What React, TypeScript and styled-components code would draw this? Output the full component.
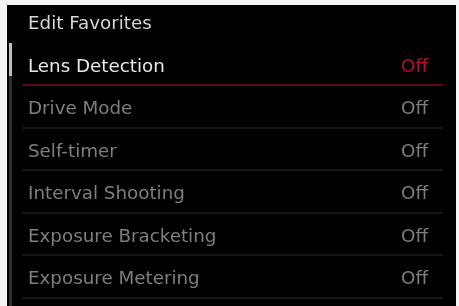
import styled, { createGlobalStyle } from 'styled-components';

const GlobalStyle = createGlobalStyle`
  html, body {
    margin: 0;
    padding: 0;
    background: #ffffff;
  }
`;

const Frame = styled.div`
  width: 459px;
  height: 306px;
  box-sizing: border-box;
  padding: 5px 3px 0 7px;
  background: #f4f4f4;
  overflow: hidden;
`;

const Screen = styled.div`
  display: flex;
  height: 301px;
  background: #000;
  font-family: 'DejaVu Sans', sans-serif;
  filter: blur(0.5px);
`;

const ScrollTrack = styled.div`
  width: 3px;
  margin: 38px 0 0 2px;
  background: #2e2e2e;
  display: flex;
  flex-direction: column;
`;

const ScrollThumb = styled.div`
  height: 33px;
  background: #bdbdbd;
`;

const Content = styled.div`
  flex: 1;
  margin: 0 13px 0 10px;
  display: flex;
  flex-direction: column;
`;

const Title = styled.div`
  height: 34.5px;
  flex: none;
  display: flex;
  align-items: center;
  padding: 0 6px 4px;
  font-size: 18.3px;
  color: #d6d6d6;
`;

const Row = styled.div<{ $active?: boolean }>`
  flex: none;
  height: 38px;
  display: flex;
  align-items: center;
  justify-content: space-between;
  padding: 2.5px 15px 0 6px;
  border-bottom: 2px solid ${({ $active }) => ($active ? '#5a0a16' : '#161616')};
  font-size: 18.3px;
`;

const Label = styled.span<{ $active?: boolean }>`
  color: ${({ $active }) => ($active ? '#e8e8e8' : '#7e7e7e')};
`;

const Value = styled.span<{ $active?: boolean }>`
  color: ${({ $active }) => ($active ? '#b5102c' : '#7e7e7e')};
`;

const items = [
  'Lens Detection',
  'Drive Mode',
  'Self-timer',
  'Interval Shooting',
  'Exposure Bracketing',
  'Exposure Metering',
];

export default function App() {
  return (
    <>
      <GlobalStyle />
      <Frame>
        <Screen>
          <ScrollTrack>
            <ScrollThumb />
          </ScrollTrack>
          <Content>
            <Title>Edit Favorites</Title>
            {items.map((label, i) => (
              <Row key={label} $active={i === 0}>
                <Label $active={i === 0}>{label}</Label>
                <Value $active={i === 0}>Off</Value>
              </Row>
            ))}
          </Content>
        </Screen>
      </Frame>
    </>
  );
}
